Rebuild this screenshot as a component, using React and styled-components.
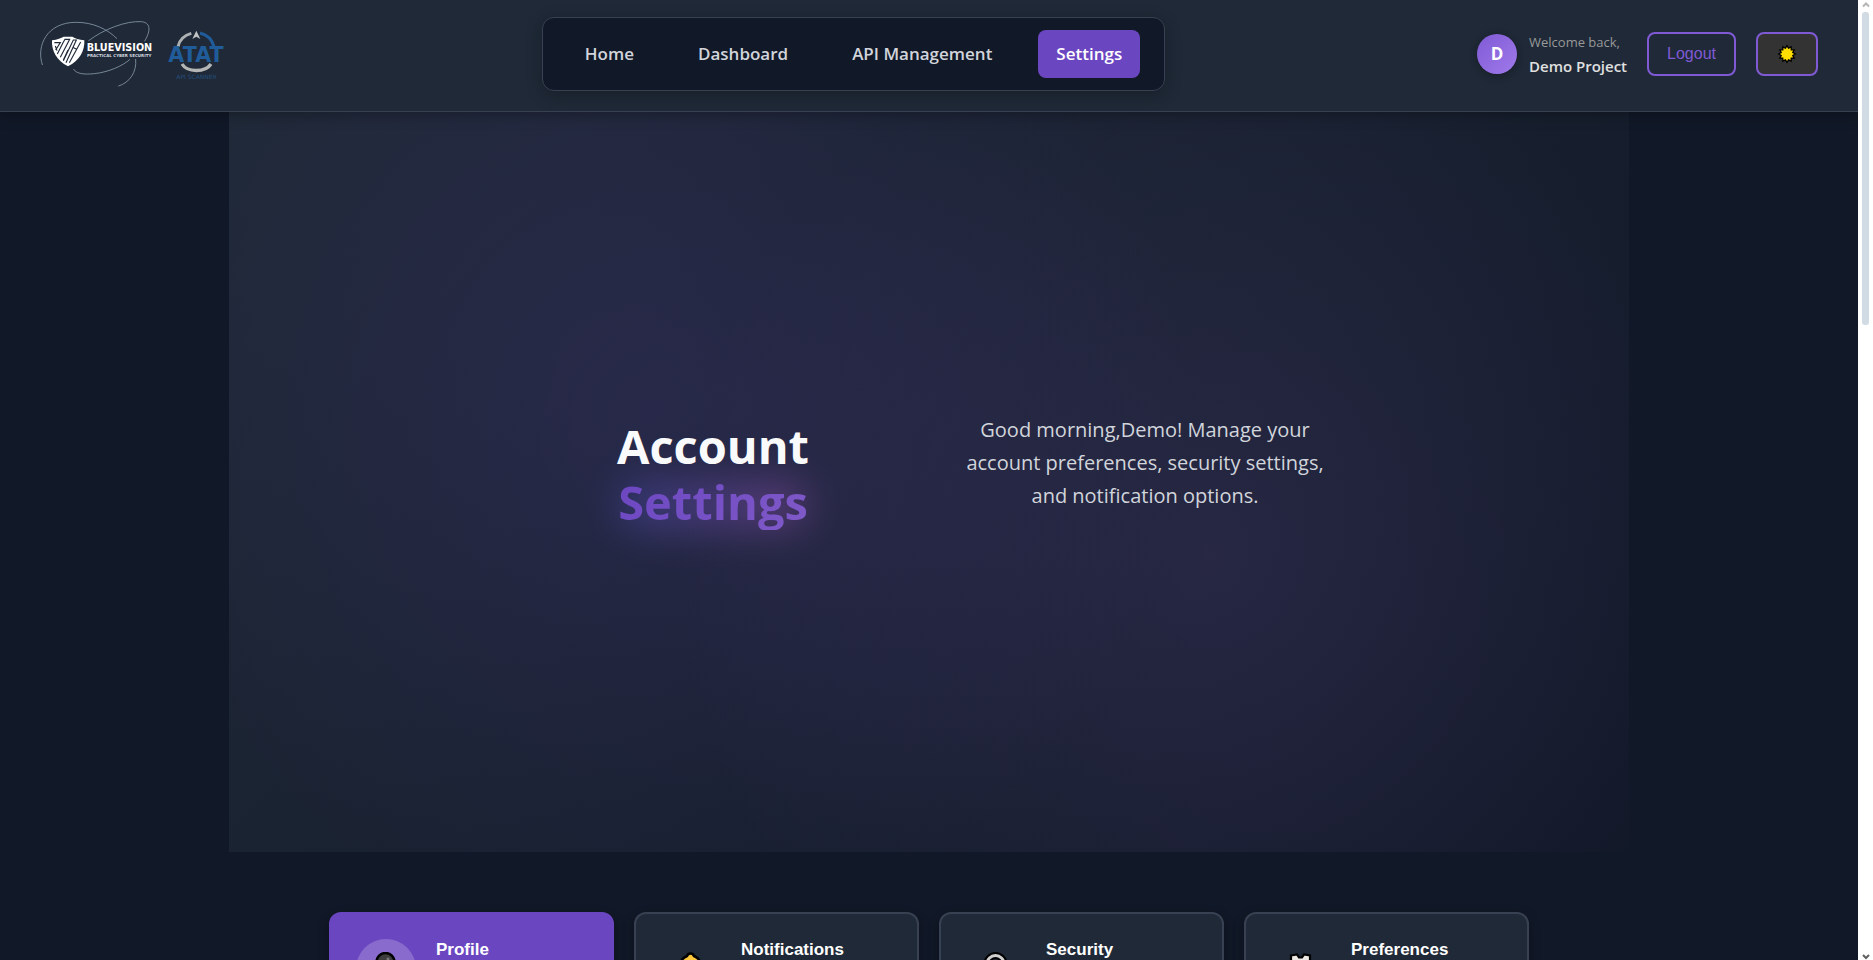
import React from "react";
import styled, { createGlobalStyle, css } from "styled-components";

const ui = `"Open Sans", "Noto Sans", sans-serif`;
const arial = `"Liberation Sans", Arial, sans-serif`;

const GlobalStyle = createGlobalStyle`
  *, *::before, *::after { box-sizing: border-box; }
  body { margin: 0; background: #111827; font-family: ${ui}; color: #f9fafb; }
  h1, h2, p { margin: 0; }
`;

const Shell = styled.div`
  display: grid;
  grid-template-columns: minmax(0, 1fr) 15px;
  height: 100vh;
  overflow: hidden;
`;

const Page = styled.div`
  overflow: hidden;
  background: #111827;
`;

const Header = styled.header`
  position: relative;
  z-index: 1;
  display: flex;
  align-items: center;
  justify-content: space-between;
  padding: 17px 40px 20px;
  background: #1f2937;
  border-bottom: 1px solid #374151;
  box-shadow: 0 4px 12px rgba(0, 0, 0, 0.25);
`;

const Brand = styled.a`
  display: flex;
  align-items: center;
  gap: 12px;
  padding-right: 4px;
`;

const Nav = styled.nav`
  display: flex;
  gap: 28px;
  padding: 12px 24px;
  background: #111827;
  border: 1px solid #374151;
  border-radius: 12px;
  box-shadow: 0 4px 16px rgba(0, 0, 0, 0.25);
`;

const NavLink = styled.a`
  padding: 0 18px;
  border-radius: 8px;
  font-size: 17px;
  font-weight: 600;
  line-height: 48px;
  text-decoration: none;
  color: #d1d5db;
  ${(p) => p.$active && css`
    background: #6b46c1;
    color: #ffffff;
  `}
`;

const Account = styled.div`
  display: flex;
  align-items: center;
  gap: 20px;
`;

const User = styled.div`
  display: flex;
  align-items: center;
  gap: 12px;
`;

const Avatar = styled.div`
  width: 40px;
  border-radius: 50%;
  background: linear-gradient(135deg, #805ad5, #9f7aea);
  box-shadow: 0 2px 8px rgba(0, 0, 0, 0.3);
  color: #ffffff;
  font-size: 17px;
  font-weight: 700;
  line-height: 40px;
  text-align: center;
`;

const Greeting = styled.div`
  font-size: 13px;
  line-height: 24px;
  color: #999999;
`;

const UserName = styled.div`
  font-size: 15px;
  font-weight: 600;
  line-height: 24px;
  color: #e0e0e0;
`;

const OutlineButton = styled.button`
  height: 44px;
  padding: 0 18px;
  border: 2px solid #805ad5;
  border-radius: 8px;
  background: transparent;
  color: #805ad5;
  font-family: ${arial};
  font-size: 16px;
`;

const ThemeButton = styled(OutlineButton)`
  display: flex;
  align-items: center;
  padding: 0 20px;
  background: #333333;
`;

const Hero = styled.section`
  display: flex;
  align-items: center;
  justify-content: center;
  max-width: 1400px;
  min-height: 740px;
  margin: 0 auto;
  background:
    radial-gradient(circle at 30% 40%, rgba(107, 70, 193, 0.17), transparent 50%),
    radial-gradient(circle at 70% 60%, rgba(128, 90, 190, 0.16), transparent 50%),
    linear-gradient(135deg, #1f2937 0%, #111827 100%);
`;

const HeroGrid = styled.div`
  display: grid;
  grid-template-columns: 1fr 1fr;
  align-items: center;
  gap: 64px;
  width: 800px;
  text-align: center;
`;

const Title = styled.h1`
  display: flex;
  flex-direction: column;
  align-items: center;
  margin-bottom: 16px;
  font-size: 47px;
  font-weight: 700;
  line-height: 56px;
  color: #f9fafb;
`;

const Accent = styled.span`
  position: relative;
  background: linear-gradient(135deg, #6b46c1, #805ac8);
  background-clip: text;
  color: transparent;

  &::before {
    content: "";
    position: absolute;
    z-index: -1;
    inset: 6px 0 0;
    border-radius: 20px;
    background: linear-gradient(90deg, #4c51bf, #9f55b5);
    filter: blur(20px);
    opacity: 0.42;
  }
`;

const TitleLayer = styled.div`
  position: relative;
  z-index: 0;
`;

const Lead = styled.p`
  margin-bottom: 40px;
  font-size: 20px;
  line-height: 33px;
  color: #d1d5db;
`;

const Tabs = styled.div`
  display: grid;
  grid-template-columns: repeat(4, 1fr);
  gap: 20px;
  max-width: 1200px;
  margin: 60px auto;
`;

const Tab = styled.button`
  display: flex;
  align-items: flex-start;
  gap: 20px;
  padding: 25px;
  border: 2px solid ${(p) => (p.$active ? "#6b46c1" : "#374151")};
  border-radius: 12px;
  background: ${(p) => (p.$active ? "#6b46c1" : "#1f2937")};
  box-shadow: 0 4px 12px rgba(0, 0, 0, 0.3);
  color: #ffffff;
  font-family: ${arial};
  text-align: left;
`;

const TabIcon = styled.span`
  display: flex;
  justify-content: center;
  width: 60px;
  height: 60px;
  padding-top: 13px;
  border-radius: 50%;
  background: ${(p) => (p.$active ? "rgba(255, 255, 255, 0.2)" : "transparent")};
`;

const TabTitle = styled.span`
  font-size: 17px;
  font-weight: 700;
  line-height: 22px;
`;

const ScrollTrack = styled.div`
  display: flex;
  flex-direction: column;
  align-items: center;
  justify-content: space-between;
  background: #ffffff;
`;

const ScrollTop = styled.div`
  display: flex;
  flex-direction: column;
  align-items: center;
  gap: 4px;
  height: 325px;
  padding-top: 2px;
`;

const ScrollThumb = styled.div`
  flex: 1;
  width: 7px;
  border-radius: 3px;
  background: #d1dbe3;
`;

const ScrollArrow = styled.svg`
  display: block;
  width: 8px;
  height: 6px;
`;

function BlueVisionLogo() {
  return (
    <svg width="116" height="70" viewBox="62 57 348 210" role="img" aria-label="BlueVision">
      <g fill="none" stroke="#8494a5" strokeWidth="2.6" strokeLinecap="round">
        <path d="M69 194C50 138 82 68 168 67c54-1 98 22 124 48" />
        <path d="M208 122c44-34 112-60 158-57 34 3 24 36 10 58" />
        <path d="M163 208c8 14 32 16 62 13 44-5 84-23 106-42" />
        <path d="M349 178c4 38-18 70-51 80" />
      </g>
      <path d="M98 121q24-4 35-11h26q12 8 36 11c2 30-14 62-49 78-34-16-50-48-48-78z" fill="#fff" />
      <g fill="none" stroke="#1f2937" strokeWidth="3.4">
        <path d="M105 128h18l-14 22M114 162l17-34 6-10h14l-28 54M132 182l30-62h9l-31 68M150 188l34-62M108 138l5 14M146 150l-14 30M160 142l12 6" />
      </g>
      <text x="202" y="153" fill="#fff" fontFamily="DejaVu Sans, sans-serif" fontWeight="700" fontSize="29">BLUEVISION</text>
      <text x="203" y="170" fill="#d5dae0" fontFamily="DejaVu Sans, sans-serif" fontWeight="700" fontSize="12">PRACTICAL CYBER SECURITY</text>
    </svg>
  );
}

function AtatLogo() {
  return (
    <svg width="58" height="50" viewBox="444 87 174 150" overflow="visible" role="img" aria-label="ATAT API Scanner">
      <g fill="none" strokeWidth="9">
        <path d="M474 140c4-20 18-34 40-40" stroke="#aeb1b4" />
        <path d="M540 99c22 5 36 20 42 41" stroke="#205c9a" />
        <path d="M486 192c16 26 70 26 87 0" stroke="#b4b5b5" strokeWidth="10" />
      </g>
      <path d="M529 92l12 25-12-7-12 7z" fill="#c0c2c4" />
      <text x="445" y="187" fill="#205c9a" fontFamily="DejaVu Sans, sans-serif" fontWeight="700" fontSize="62">ATAT</text>
      <text x="469" y="237" fill="#24507f" fontFamily="DejaVu Sans, sans-serif" fontSize="18">API SCANNER</text>
    </svg>
  );
}

function SunIcon() {
  const points = Array.from({ length: 24 }, (_, i) => {
    const r = i % 2 ? 6 : 8.3;
    const a = (i * Math.PI) / 12;
    return `${9 + r * Math.sin(a)},${9 - r * Math.cos(a)}`;
  }).join(" ");
  return (
    <svg width="18" height="18" viewBox="0 0 18 18" overflow="visible" aria-hidden="true">
      <polygon points={points} fill="#ffdd00" stroke="#000" strokeWidth="1.300" />
    </svg>
  );
}

const icons = {
  Profile: (
    <>
      <path d="M4 34c0-9 5-13 13-13s13 4 13 13z" fill="#333" stroke="#000" strokeWidth="2" />
      <circle cx="16.500" cy="10" r="9" fill="#3c3c3c" stroke="#000" strokeWidth="2.500" />
      <circle cx="19" cy="7" r="1.500" fill="#777" />
    </>
  ),
  Notifications: (
    <path d="M16.500 1.500c2 0 3 1 3.500 2.500 5 2 7 6 7 11v7l3 4H3l3-4v-7c0-5 2-9 7-11 .5-1.500 1.500-2.500 3.500-2.500z" fill="#ffc83d" stroke="#000" strokeWidth="2.500" />
  ),
  Security: (
    <>
      <path d="M8 18v-6a8.500 8.500 0 0 1 17 0v6" fill="none" stroke="#000" strokeWidth="7" />
      <path d="M8 18v-6a8.500 8.500 0 0 1 17 0v6" fill="none" stroke="#d0d0d0" strokeWidth="3" />
      <rect x="4" y="16" width="25" height="17" rx="2" fill="#ffc83d" stroke="#000" strokeWidth="2" />
    </>
  ),
  Preferences: (
    <path d="M7 3.500l6-1 2 3h3l2-3 6 1v7l4 3v8l-5 4-4 6h-9l-4-6-5-4v-8l4-3z" fill="#ece8e4" stroke="#000" strokeWidth="2.200" />
  ),
};

const navItems = ["Home", "Dashboard", "API Management", "Settings"];

export default function App() {
  return (
    <>
      <GlobalStyle />
      <Shell>
        <Page>
          <Header>
            <Brand href="#home">
              <BlueVisionLogo />
              <AtatLogo />
            </Brand>
            <Nav>
              {navItems.map((item) => (
                <NavLink key={item} href="#" $active={item === "Settings"}>{item}</NavLink>
              ))}
            </Nav>
            <Account>
              <User>
                <Avatar>D</Avatar>
                <div>
                  <Greeting>Welcome back,</Greeting>
                  <UserName>Demo Project</UserName>
                </div>
              </User>
              <OutlineButton type="button">Logout</OutlineButton>
              <ThemeButton type="button" aria-label="Toggle theme"><SunIcon /></ThemeButton>
            </Account>
          </Header>
          <main>
            <Hero>
              <HeroGrid>
                <TitleLayer>
                  <Title>
                    <span>Account</span>
                    <Accent>Settings</Accent>
                  </Title>
                </TitleLayer>
                <Lead>
                  Good morning,Demo! Manage your account preferences, security settings, and notification options.
                </Lead>
              </HeroGrid>
            </Hero>
            <Tabs>
              {Object.entries(icons).map(([name, drawing]) => (
                <Tab key={name} type="button" $active={name === "Profile"}>
                  <TabIcon $active={name === "Profile"}>
                    <svg width="34" height="34" viewBox="0 0 34 34" aria-hidden="true">{drawing}</svg>
                  </TabIcon>
                  <TabTitle>{name}</TabTitle>
                </Tab>
              ))}
            </Tabs>
          </main>
        </Page>
        <ScrollTrack aria-hidden="true">
          <ScrollTop>
            <ScrollArrow viewBox="0 0 8 6"><path d="M1 4.500l3-3 3 3" fill="none" stroke="#b5b5b5" strokeWidth="2" /></ScrollArrow>
            <ScrollThumb />
          </ScrollTop>
          <ScrollArrow viewBox="0 0 8 6"><path d="M1 1l3 3 3-3" fill="none" stroke="#606060" strokeWidth="2" /></ScrollArrow>
        </ScrollTrack>
      </Shell>
    </>
  );
}
